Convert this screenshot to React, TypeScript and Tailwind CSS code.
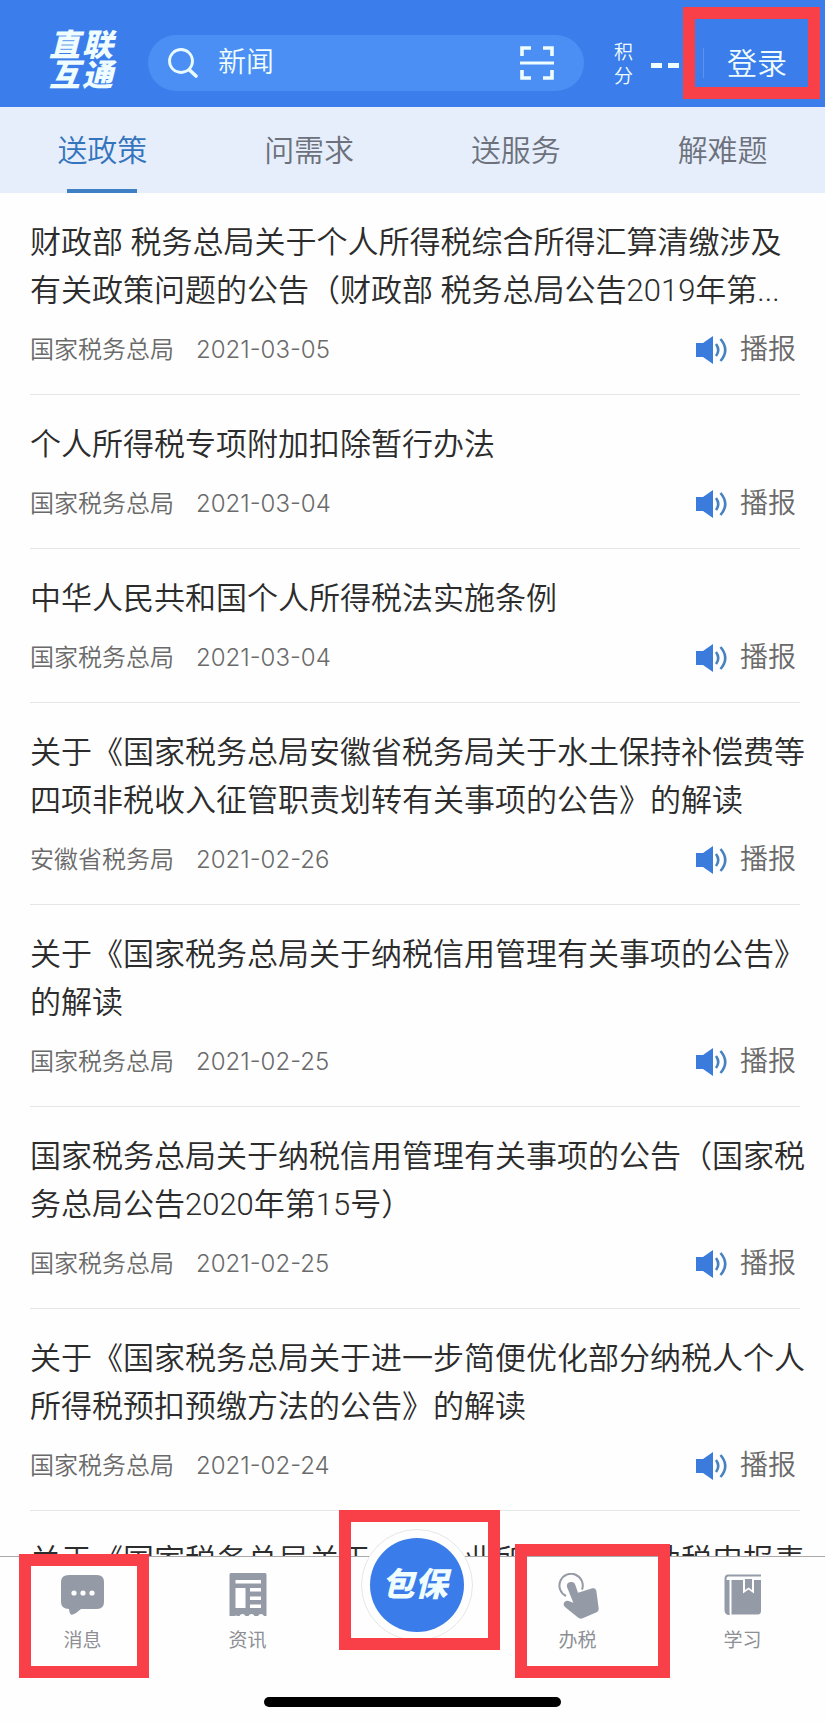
import type { ReactNode } from "react";

type Article = {
  title: string;
  source: string;
  date: string;
};

const articles: Article[] = [
  {
    title:
      "财政部 税务总局关于个人所得税综合所得汇算清缴涉及有关政策问题的公告（财政部 税务总局公告2019年第...",
    source: "国家税务总局",
    date: "2021-03-05",
  },
  { title: "个人所得税专项附加扣除暂行办法", source: "国家税务总局", date: "2021-03-04" },
  { title: "中华人民共和国个人所得税法实施条例", source: "国家税务总局", date: "2021-03-04" },
  {
    title: "关于《国家税务总局安徽省税务局关于水土保持补偿费等四项非税收入征管职责划转有关事项的公告》的解读",
    source: "安徽省税务局",
    date: "2021-02-26",
  },
  {
    title: "关于《国家税务总局关于纳税信用管理有关事项的公告》的解读",
    source: "国家税务总局",
    date: "2021-02-25",
  },
  {
    title: "国家税务总局关于纳税信用管理有关事项的公告（国家税务总局公告2020年第15号）",
    source: "国家税务总局",
    date: "2021-02-25",
  },
  {
    title: "关于《国家税务总局关于进一步简便优化部分纳税人个人所得税预扣预缴方法的公告》的解读",
    source: "国家税务总局",
    date: "2021-02-24",
  },
];

const tabs = ["送政策", "问需求", "送服务", "解难题"];

const SearchIcon = () => (
  <svg viewBox="0 0 30 30" className="h-[30px] w-[30px] shrink-0" fill="none" stroke="#e9fbff" aria-hidden="true">
    <circle cx="13" cy="13" r="11.5" strokeWidth="2.8" />
    <path d="M21.5 22 28 28" strokeWidth="3.6" strokeLinecap="round" />
  </svg>
);

const ScanIcon = () => (
  <svg viewBox="0 0 34 34" className="h-[34px] w-[34px]" fill="none" stroke="#effdff" strokeWidth="3.6" aria-hidden="true">
    <path d="M2 10V2h9M23 2h9v8M2 24v8h9M23 32h9v-8" />
    <path d="M0 17h34" strokeWidth="3" />
  </svg>
);

const SpeakerIcon = () => (
  <svg viewBox="0 0 31 28" className="h-7 w-[31px]" aria-hidden="true">
    <path d="M0 7h7L17 0v28L7 21H0Z" fill="#3a7bdc" />
    <path d="M20 8q4.500 6 0 12M24.500 3q9.500 11 0 22" fill="none" stroke="#4681c0" strokeWidth="2.600" />
  </svg>
);

const MessageIcon = () => (
  <svg viewBox="0 0 44 46" className="h-[46px] w-11" aria-hidden="true">
    <path
      d="M8 2h28q7 0 7 7v20q0 7-7 7H20l-5 4q-4 2.500-5 1.500-1.500-1-2-5.500Q0 36 0 29V9q0-7 8-7Z"
      fill="#949aa6"
    />
    <g fill="#fff">
      <circle cx="13" cy="20" r="2.600" />
      <circle cx="22" cy="20" r="2.600" />
      <circle cx="31" cy="20" r="2.600" />
    </g>
  </svg>
);

const NewsIcon = () => (
  <svg viewBox="0 0 38 46" className="h-[46px] w-[38px]" aria-hidden="true">
    <path d="M2 0h34q1.500 0 1.500 1.500V43H35a3.200 3.200 0 0 0-6 0h-3.500a3.200 3.200 0 0 0-6 0h-3a3.200 3.200 0 0 0-6 0h-2a3.200 3.200 0 0 0-3 0H0.500V1.500Q0.500 0 2 0Z" fill="#949aa6" />
    <path d="M6.500 7H32v3.500H6.500ZM6.500 15h10v20h-10ZM21 15h11v3.500H21ZM21 23.500h11V27H21ZM21 31.500h11V35H21Z" fill="#fff" />
  </svg>
);

const TouchIcon = () => (
  <svg viewBox="457 246 132 138" className="h-[46px] w-11" aria-hidden="true">
    <path d="M487 315a35 35 0 1 1 48-19" fill="none" stroke="#949aa6" strokeWidth="6" />
    <path
      d="M490 288q-2-13 10-15 12-2 15 9l8 23 43-13q9-2 12 7l7 53q1 9-6 12l-42 18q-8 3-15-3l-38-31q-6-6-3-13 5-8 14-5l14 5Z"
      fill="#949aa6"
    />
  </svg>
);

const BookIcon = () => (
  <svg viewBox="0 0 38 46" className="h-[46px] w-[38px]" aria-hidden="true">
    <path d="M37 2.500H4Q1.500 2.500 1.500 6v31q0 4 4 4" fill="none" stroke="#949aa6" strokeWidth="2" />
    <path d="M1 7h4.500v34.500Q1 41.500 1 37ZM7.500 7H19v13.500l5.500-4 5.500 4V7h7v31q0 3.500-3.500 3.500h-26Z" fill="#949aa6" />
    <path d="M21 6h7v11l-3.500-2.500L21 17Z" fill="#949aa6" />
  </svg>
);

// red frame drawn around a control to call it out
const Highlight = ({ className }: { className: string }) => (
  <span aria-hidden="true" className={`pointer-events-none absolute border-12 border-[#f93f48] ${className}`} />
);

const NavItem = ({ label, icon, children }: { label: string; icon: ReactNode; children?: ReactNode }) => (
  <button type="button" className="relative flex flex-col items-center pt-4 text-[19px] leading-7 text-[#8d8f94]">
    {icon}
    <span className="mt-2">{label}</span>
    {children}
  </button>
);

const ArticleRow = ({ title, source, date }: Article) => (
  <li className="border-b border-[#e6e6e6] pt-[26px] pb-[26px]">
    <h2 className="-mr-3 text-[31px] leading-12 font-[350] text-[#2c2c2c]">
      <a href="#">{title}</a>
    </h2>
    <div className="mt-[17px] flex h-9 items-center pr-1 text-[#6a6a6a]">
      <span className="text-2xl font-[350]">{source}</span>
      <time className="ml-[22px] font-['Inter',sans-serif] text-2xl font-light">{date}</time>
      <button type="button" className="ml-auto flex items-center gap-[13px] text-[28px] font-[350]">
        <SpeakerIcon />
        播报
      </button>
    </div>
  </li>
);

const App = () => {
  return (
    <div className="flex h-screen flex-col overflow-hidden bg-[#fefefe] font-['Roboto','Noto_Sans_CJK_SC',sans-serif]">
      <header className="flex h-[107px] shrink-0 items-end bg-[#3b7deb] pb-4 pl-[49px] text-[#effdff]">
        <div className="mr-[35px] grid grid-cols-2 gap-x-[2px] text-[31px] leading-[30px] font-black italic">
          <span>直</span>
          <span>联</span>
          <span>互</span>
          <span>通</span>
        </div>
        <div className="flex h-14 min-w-0 flex-1 items-center rounded-full bg-[#4b8ff4] pr-[30px] pl-5">
          <SearchIcon />
          <input
            type="search"
            aria-label="搜索"
            defaultValue="新闻"
            className="ml-5 min-w-0 flex-1 bg-transparent text-[28px] font-[350] outline-none"
          />
          <button type="button" aria-label="扫一扫">
            <ScanIcon />
          </button>
        </div>
        <div className="ml-[30px] flex h-14 items-center">
          <span className="mt-1 w-5 text-[19px] leading-6 font-[350]">积分</span>
          <span className="mt-1 ml-[17px] flex gap-1.5" role="img" aria-label="--">
            <i className="h-[5px] w-[11px] bg-[#effdff]" />
            <i className="h-[5px] w-[11px] bg-[#effdff]" />
          </span>
        </div>
        <div className="relative ml-6 flex h-14 items-center pr-[38px]">
          <span className="h-[30px] w-px bg-[#5f92e8]" />
          <button type="button" className="ml-[23px] text-[30px] font-[350]">
            登录
          </button>
          <Highlight className="-top-7 right-[5px] h-[92px] w-[137px]" />
        </div>
      </header>

      <nav className="grid h-[86px] shrink-0 grid-cols-4 gap-x-[2px] bg-[#e6eefb]">
        {tabs.map((tab, i) => (
          <button
            key={tab}
            type="button"
            className={
              i === 0
                ? "relative text-[30px] font-[350] text-[#3474bd]"
                : "relative text-[30px] font-[350] text-[#6c717c]"
            }
          >
            {tab}
            {i === 0 && <span className="absolute bottom-0 left-1/2 h-1 w-[70px] -translate-x-1/2 bg-[#3f7fc4]" />}
          </button>
        ))}
      </nav>

      <main className="min-h-0 flex-1 overflow-hidden pr-[25px] pl-[30px]">
        <ul>
          {articles.map((article) => (
            <ArticleRow key={article.title} {...article} />
          ))}
          <li className="pt-[26px]">
            <h2 className="-mr-3 text-[31px] leading-12 font-[350] text-[#2c2c2c]">
              <a href="#">关于《国家税务总局关于修订企业所得税年度纳税申报表</a>
            </h2>
          </li>
        </ul>
      </main>

      <footer className="relative shrink-0 border-t border-[#a9a9a9] bg-[#fefefe] pb-4">
        <div className="grid h-[140px] grid-cols-5 items-start">
          <NavItem label="消息" icon={<MessageIcon />}>
            <Highlight className="-top-[3px] right-4 left-[19px] h-[124px]" />
          </NavItem>
          <NavItem label="资讯" icon={<NewsIcon />} />
          <button type="button" className="relative flex justify-center pl-2">
            <span className="-mt-7 flex h-28 w-28 items-center justify-center rounded-full border border-[#e4e8e6] bg-[#fefefe]">
              <span className="flex h-[94px] w-[94px] items-center justify-center rounded-full bg-[#3a7ce9] pr-1 text-[33px] font-black text-[#effdff] italic">
                包保
              </span>
            </span>
            <Highlight className="-top-[47px] -right-[5px] left-[9px] h-[140px]" />
          </button>
          <NavItem label="办税" icon={<TouchIcon />}>
            <Highlight className="-top-[13px] -right-2.5 left-5 h-[134px]" />
          </NavItem>
          <NavItem label="学习" icon={<BookIcon />} />
        </div>
        <div className="mx-auto h-2.5 w-9/25 rounded-full bg-black" />
      </footer>
    </div>
  );
};

export default App;
